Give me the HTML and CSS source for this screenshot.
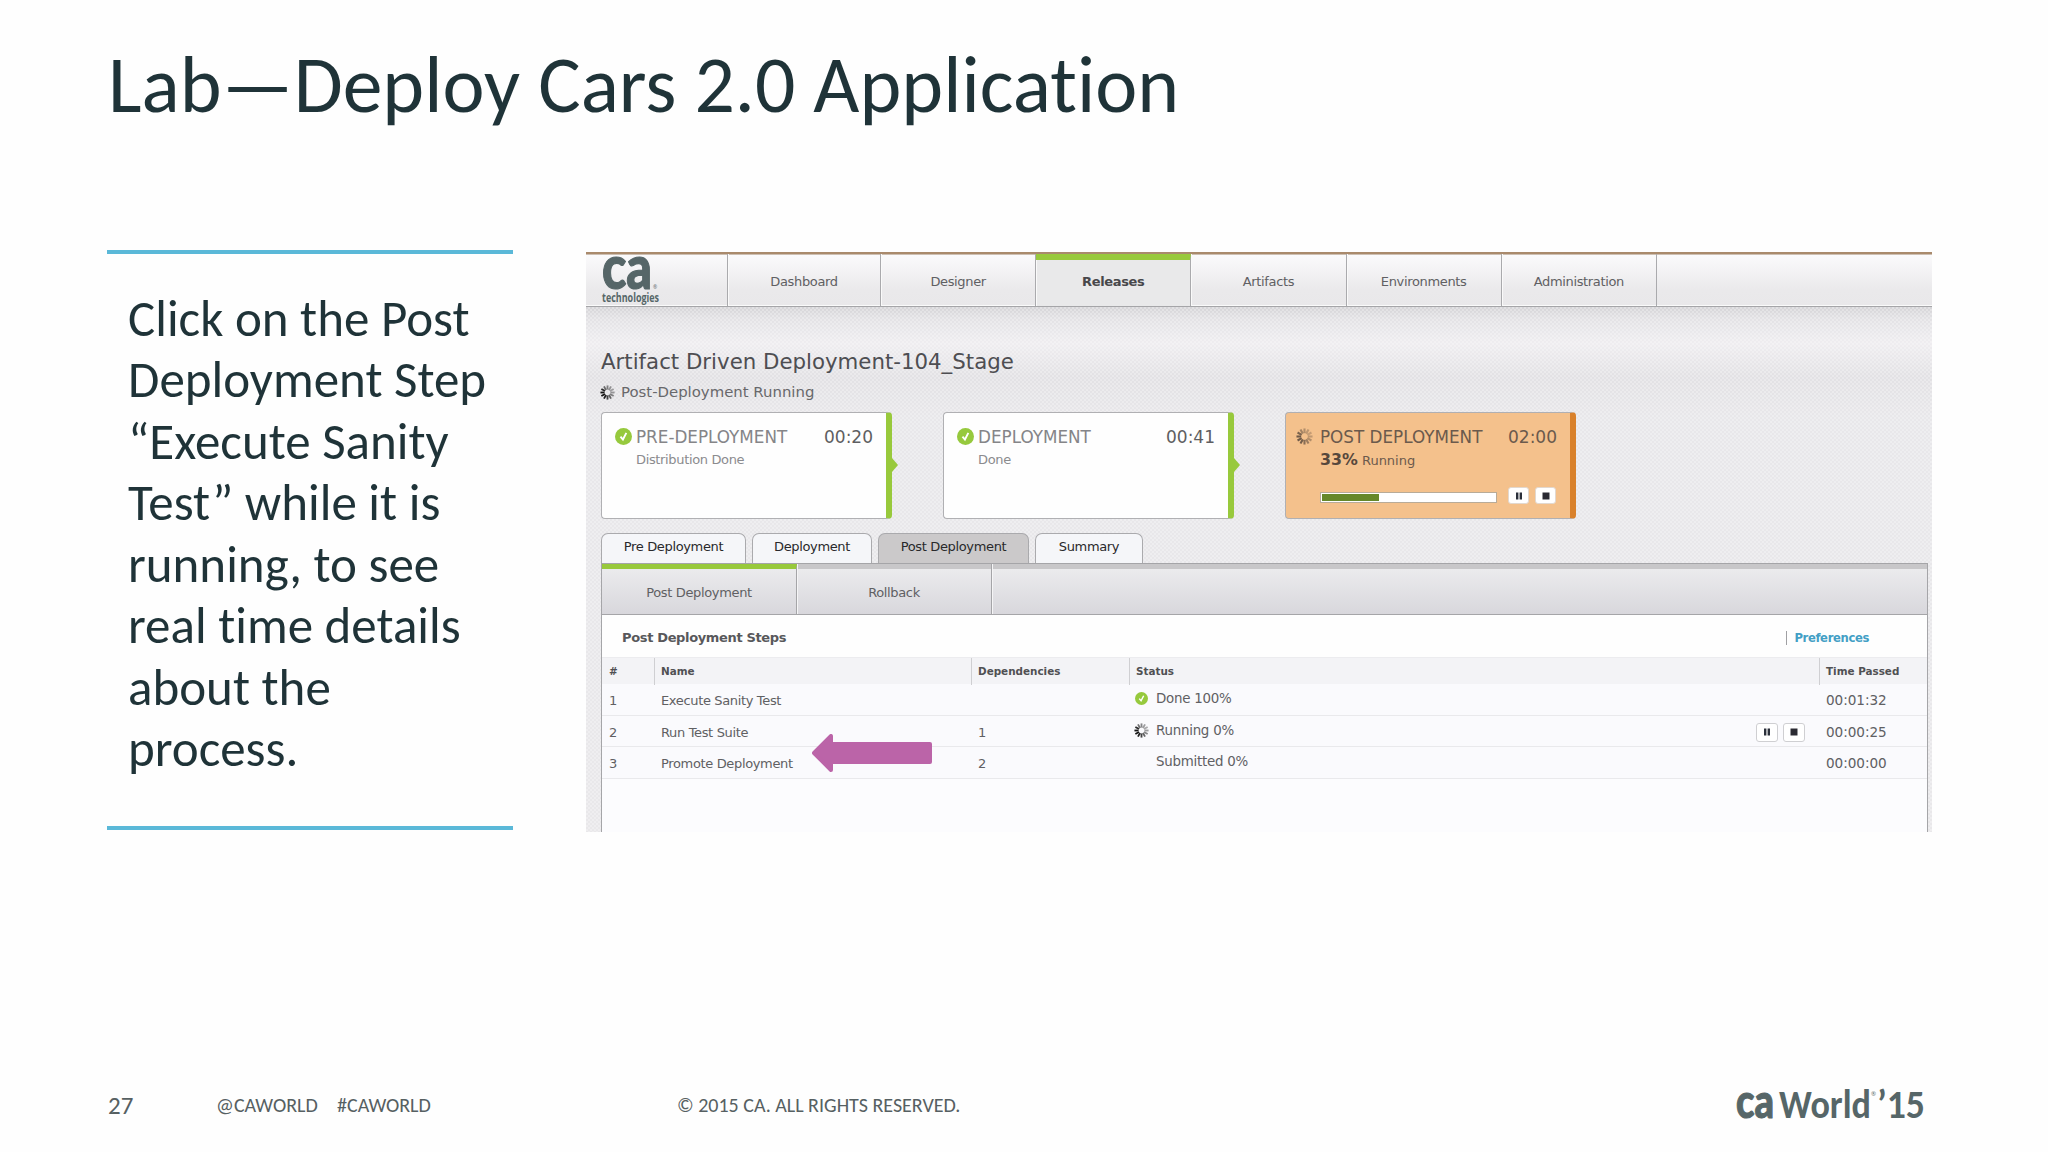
FILE: index.html
```
<!DOCTYPE html>
<html>
<head>
    <meta charset="utf-8">
    <title>Lab—Deploy Cars 2.0 Application</title>
    <link rel="stylesheet" href="styles.css">
</head>
<body>
    <svg width="0" height="0" class="defs">
        <symbol id="check" viewBox="0 0 18 18">
            <circle cx="9" cy="9" r="9" fill="#96c93d"/>
            <path d="M5.8 9.2l2.6 3L12 5.2" fill="none" stroke="#fff" stroke-width="2"/>
        </symbol>
        <symbol id="spinner" viewBox="0 0 18 18">
            <g stroke="currentColor" stroke-width="2.2">
                <path d="M9 .5v5" opacity=".5"/>
                <path d="M9 .5v5" opacity=".4" transform="rotate(30 9 9)"/>
                <path d="M9 .5v5" opacity=".35" transform="rotate(60 9 9)"/>
                <path d="M9 .5v5" opacity=".4" transform="rotate(90 9 9)"/>
                <path d="M9 .5v5" opacity=".5" transform="rotate(120 9 9)"/>
                <path d="M9 .5v5" opacity=".65" transform="rotate(150 9 9)"/>
                <path d="M9 .5v5" opacity=".8" transform="rotate(180 9 9)"/>
                <path d="M9 .5v5" opacity=".95" transform="rotate(210 9 9)"/>
                <path d="M9 .5v5" transform="rotate(240 9 9)"/>
                <path d="M9 .5v5" transform="rotate(270 9 9)"/>
                <path d="M9 .5v5" opacity=".9" transform="rotate(300 9 9)"/>
                <path d="M9 .5v5" opacity=".6" transform="rotate(330 9 9)"/>
            </g>
        </symbol>
        <symbol id="pause" viewBox="0 0 8 8">
            <path d="M1 .5h2.4v7H1zM4.6 .5H7v7H4.6z" fill="#2a2f3a"/>
        </symbol>
        <symbol id="stop" viewBox="0 0 8 8">
            <path d="M.5 .5h7v7h-7z" fill="#2a2a32"/>
        </symbol>
    </svg>

    <div class="slide">
        <h1>Lab—Deploy Cars 2.0 Application</h1>

        <div class="content">
            <div class="callout">
                Click on the Post<br>Deployment Step<br>“Execute Sanity<br>Test” while it is<br>running, to see<br>real time details<br>about the<br>process.
            </div>

            <div class="app">
                <div class="nav">
                    <div class="brand">
                        <svg width="70" height="51" viewBox="0 0 70 51">
                            <text class="brand-ca" x="0" y="35" textLength="50" lengthAdjust="spacingAndGlyphs">ca</text>
                            <text class="brand-reg" x="51" y="35">®</text>
                            <text class="brand-tech" x="0" y="47.5" textLength="57" lengthAdjust="spacingAndGlyphs">technologies</text>
                        </svg>
                    </div>
                    <div class="nav-item">Dashboard</div>
                    <div class="nav-item">Designer</div>
                    <div class="nav-item active">Releases</div>
                    <div class="nav-item">Artifacts</div>
                    <div class="nav-item">Environments</div>
                    <div class="nav-item">Administration</div>
                </div>

                <div class="page">
                    <h2>Artifact Driven Deployment-104_Stage</h2>
                    <div class="state">
                        <svg class="icon-small"><use href="#spinner"/></svg>
                        Post-Deployment Running
                    </div>

                    <div class="cards">
                        <div class="card done">
                            <svg class="icon"><use href="#check"/></svg>
                            <div class="card-main">
                                <div class="card-head"><span>PRE-DEPLOYMENT</span><span class="time">00:20</span></div>
                                <div class="card-sub">Distribution Done</div>
                            </div>
                        </div>
                        <div class="card done">
                            <svg class="icon"><use href="#check"/></svg>
                            <div class="card-main">
                                <div class="card-head"><span>DEPLOYMENT</span><span class="time">00:41</span></div>
                                <div class="card-sub">Done</div>
                            </div>
                        </div>
                        <div class="card running">
                            <svg class="icon"><use href="#spinner"/></svg>
                            <div class="card-main">
                                <div class="card-head"><span>POST DEPLOYMENT</span><span class="time">02:00</span></div>
                                <div class="card-sub"><b>33%</b> Running</div>
                                <div class="card-progress">
                                    <div class="progress"><div class="progress-fill" style="width: 33%"></div></div>
                                    <span class="btn"><svg><use href="#pause"/></svg></span>
                                    <span class="btn"><svg><use href="#stop"/></svg></span>
                                </div>
                            </div>
                        </div>
                    </div>

                    <div class="tabs">
                        <div class="tab tab-pre">Pre Deployment</div>
                        <div class="tab tab-dep">Deployment</div>
                        <div class="tab tab-post selected">Post Deployment</div>
                        <div class="tab tab-sum">Summary</div>
                    </div>

                    <div class="panel">
                        <div class="subtabs">
                            <div class="subtab active">Post Deployment</div>
                            <div class="subtab">Rollback</div>
                        </div>
                        <div class="panel-title">
                            <span>Post Deployment Steps</span>
                            <a class="preferences">Preferences</a>
                        </div>
                        <div class="row head">
                            <div>#</div>
                            <div>Name</div>
                            <div>Dependencies</div>
                            <div>Status</div>
                            <div>Time Passed</div>
                        </div>
                        <div class="row">
                            <div>1</div>
                            <div>Execute Sanity Test</div>
                            <div></div>
                            <div class="status"><span class="status-icon"><svg class="icon-check"><use href="#check"/></svg></span><span>Done 100%</span></div>
                            <div class="passed">00:01:32</div>
                        </div>
                        <div class="row">
                            <div>2</div>
                            <div>Run Test Suite</div>
                            <div>1</div>
                            <div class="status">
                                <span class="status-icon"><svg class="icon-small"><use href="#spinner"/></svg></span><span>Running 0%</span>
                                <div class="actions">
                                    <span class="btn"><svg><use href="#pause"/></svg></span>
                                    <span class="btn"><svg><use href="#stop"/></svg></span>
                                </div>
                            </div>
                            <div class="passed">00:00:25</div>
                        </div>
                        <div class="row">
                            <div>3</div>
                            <div>Promote Deployment</div>
                            <div>2</div>
                            <div class="status"><span class="status-icon"></span><span>Submitted 0%</span></div>
                            <div class="passed">00:00:00</div>
                        </div>
                    </div>
                </div>

                <svg class="pointer" width="120" height="38" viewBox="0 0 120 38">
                    <path d="M2 19L19 2v8h99v18H19v8z" fill="#bb64a8" stroke="#bb64a8" stroke-width="4" stroke-linejoin="round"/>
                </svg>
            </div>
        </div>

        <div class="footer">
            <span class="page-number">27</span>
            <span class="handle">@CAWORLD</span>
            <span class="hashtag">#CAWORLD</span>
            <span class="copyright">© 2015 CA. ALL RIGHTS RESERVED.</span>
            <svg class="logo" width="194" height="52" viewBox="0 0 194 52">
                <text class="logo-ca" x="1" y="38.5" textLength="38" lengthAdjust="spacingAndGlyphs">ca</text>
                <text class="logo-world" x="44" y="38.5" textLength="92" lengthAdjust="spacingAndGlyphs">World</text>
                <text class="logo-reg" x="136" y="17">®</text>
                <text class="logo-world" x="142" y="38.5" textLength="48" lengthAdjust="spacingAndGlyphs">’15</text>
            </svg>
        </div>
    </div>
</body>
</html>
```
FILE: styles.css
```
* {
    box-sizing: border-box;
}

body {
    margin: 0;
    background: #fefefe;
    color: #1f3338;
    font-family: Carlito, Lato, sans-serif;
    font-variant-ligatures: none;
}

.defs {
    display: block;
}

.slide {
    width: 2048px;
    height: 1152px;
    display: flex;
    flex-direction: column;
    overflow: hidden;
}

h1 {
    margin: 0;
    padding: 35px 0 0 108px;
    height: 250px;
    font-size: 79.7px;
    font-weight: normal;
    line-height: 100px;
}

.content {
    display: flex;
    gap: 73px;
    padding-left: 107px;
    height: 582px;
}

.callout {
    width: 406px;
    height: 580px;
    padding: 34px 0 0 21px;
    border-top: 4px solid #5ab8d8;
    border-bottom: 4px solid #5ab8d8;
    font-size: 51px;
    line-height: 61.45px;
    white-space: nowrap;
}

/* application window */
.app {
    position: relative;
    width: 1346px;
    height: 580px;
    margin-top: 2px;
    overflow: hidden;
    display: flex;
    flex-direction: column;
    font-family: "DejaVu Sans", sans-serif;
    font-size: 13px;
    letter-spacing: -.35px;
    color: #606063;
    white-space: nowrap;
}

.nav {
    display: flex;
    height: 55px;
    border-top: 2px solid #a98a6c;
    border-bottom: 1px solid #a5a5a8;
    background: linear-gradient(#fbfbfc, #eae9eb 70%, #e9e8ea);
    box-shadow: inset 0 1px #cdbfb2, inset 0 -1px #fafafa;
}

.brand {
    width: 142px;
    padding-left: 16px;
    border-right: 1px solid #aaaaad;
    letter-spacing: 0;
}

.brand svg {
    display: block;
    overflow: visible;
}

.brand text,
.logo text {
    fill: #566668;
}

.brand-ca {
    font: 900 61px Lato, sans-serif;
    stroke: #566668;
    stroke-width: 1.2;
}

.brand-reg {
    font: 5px "Open Sans", sans-serif;
}

.brand-tech {
    font: bold 12.5px "Open Sans", sans-serif;
}

.nav-item {
    width: 155.2px;
    line-height: 55px;
    text-align: center;
    border-right: 1px solid #aaaaad;
    box-shadow: inset 1px 0 #fafafa;
}

.brand + .nav-item {
    width: 153px;
}

.nav-item.active {
    background: #e9e9ea;
    border-top: 6px solid #98c93c;
    line-height: 43px;
    font-weight: bold;
    color: #48484b;
}

.page {
    flex: 1;
    padding: 37px 4px 0 15px;
    background:
        conic-gradient(rgba(255, 255, 255, .28) 25%, transparent 0 50%, rgba(255, 255, 255, .28) 0 75%, transparent 0) 0 0 / 4px 4px,
        linear-gradient(#d5d4d7 0, #e3e2e5 12px, #efedf0 36px, #e2e1e4 70px, #e8e7ea 110px, #e9e8ea 100%);
}

h2 {
    margin: 0;
    height: 34px;
    line-height: 36px;
    font-size: 21.3px;
    font-weight: normal;
    letter-spacing: 0;
    color: #4e4e52;
}

.state {
    display: flex;
    align-items: center;
    gap: 5px;
    height: 30px;
    margin-bottom: 4px;
    padding-bottom: 2px;
    font-size: 14.9px;
    letter-spacing: 0;
    color: #68686b;
}

.icon-small {
    width: 15px;
    height: 15px;
    margin-left: -1px;
    margin-right: 1px;
    color: #151515;
}

.cards {
    display: flex;
    gap: 51px;
    height: 107px;
}

.card {
    position: relative;
    display: flex;
    width: 291px;
    padding: 15px 13px 0 13px;
    gap: 4px;
    background: #fefefe;
    border: 1px solid #b0b0b3;
    border-right: 6px solid #98c93c;
    border-radius: 4px;
}

/* little arrow on the edge of a finished stage */
.card.done::after {
    content: "";
    position: absolute;
    right: -12px;
    top: 45px;
    border: 7px solid transparent;
    border-left: 6px solid #98c93c;
    border-right: 0;
}

.card.running {
    background: #f4c18c;
    border-right-color: #d9812b;
    padding-left: 10px;
    gap: 7px;
}

.icon {
    width: 17px;
    height: 17px;
    flex: none;
    color: #6f5a48;
}

.card-main {
    flex: 1;
}

.card-head {
    display: flex;
    justify-content: space-between;
    height: 22px;
    line-height: 18px;
    font-size: 16.8px;
    letter-spacing: 0;
    color: #858588;
}

.card-head .time {
    font-size: 17px;
    color: #5e5e61;
}

.card-sub {
    height: 22px;
    line-height: 19px;
    color: #8b8b8e;
}

.running .card-head,
.running .card-head .time,
.running .card-sub {
    color: #6b5a4c;
}

.running .card-sub {
    line-height: 20px;
    letter-spacing: 0;
}

.card-sub b {
    font-size: 15.8px;
    color: #57483c;
}

.card-progress {
    display: flex;
    align-items: center;
    gap: 6px;
    margin-top: 15px;
}

.progress {
    width: 177px;
    height: 11px;
    margin-top: 3px;
    margin-right: 5px;
    padding: 1px;
    background: #fff;
    border: 1px solid #b8ab98;
}

.progress-fill {
    height: 100%;
    background: #66882a;
}

.btn {
    display: flex;
    align-items: center;
    justify-content: center;
    width: 21px;
    height: 17px;
    flex: none;
    background: #fff;
    border: 1px solid #e2d8cf;
    border-radius: 3px;
}

.btn svg {
    width: 8px;
    height: 8px;
}

.tabs {
    display: flex;
    gap: 6px;
    height: 30px;
    margin-top: 14px;
}

.tab {
    border: 1px solid #aaaaad;
    border-bottom: 0;
    border-radius: 7px 7px 0 0;
    background: #f5f6f9;
    line-height: 26px;
    text-align: center;
    color: #29292b;
}

.tab-pre {
    width: 145px;
}

.tab-dep {
    width: 120px;
}

.tab-post {
    width: 151px;
}

.tab-sum {
    width: 108px;
}

.tab.selected {
    background: #cbc9ca;
}

.panel {
    height: 270px;
    border: 1px solid #a5a5a8;
    border-bottom: 0;
    background: #fcfcfe;
}

.subtabs {
    display: flex;
    height: 51px;
    border-bottom: 1px solid #a5a5a8;
    background: linear-gradient(#c8c7c9 5px, #ebebed 5px, #d8d7dc);
}

.subtab {
    width: 195px;
    padding-top: 5px;
    line-height: 47px;
    text-align: center;
    border-right: 1px solid #a5a5a8;
    box-shadow: 1px 0 #f5f5f6;
}

.subtab.active {
    padding-top: 0;
    border-top: 5px solid #98c93c;
}

.panel-title {
    display: flex;
    justify-content: space-between;
    align-items: center;
    height: 42px;
    padding: 3px 58px 0 20px;
    background: #fefefe;
    font-weight: bold;
    color: #58585b;
}

.preferences {
    padding-left: 7px;
    border-left: 1px solid #a0a0a3;
    font-size: 11.6px;
    color: #439fc5;
}

.row {
    display: grid;
    grid-template-columns: 53px 317px 158px 690px 1fr;
    height: 31.6px;
    line-height: 33px;
    border-bottom: 1px solid #e9e9ec;
    background: #fafafd;
}

.row > div {
    padding-left: 6px;
}

.row > div:first-child {
    padding-left: 7px;
}

.row.head {
    height: 27px;
    line-height: 27px;
    border: 0;
    border-top: 1px solid #ececef;
    background: #f3f3f6;
    font-size: 10.4px;
    font-weight: bold;
    letter-spacing: 0;
    color: #505053;
}

.row.head > div:not(:last-child) {
    border-right: 1px solid #cfcfd2;
}

.row .status {
    display: flex;
    padding: 0 15px 0 5px;
    line-height: 29px;
    font-size: 13.4px;
    letter-spacing: -.25px;
}

.status-icon {
    display: flex;
    align-items: center;
    width: 21px;
    height: 29px;
}

.icon-check {
    width: 13px;
    height: 13px;
}

.actions {
    display: flex;
    align-items: center;
    gap: 5px;
    margin-left: auto;
}

.actions .btn {
    width: 22px;
    height: 19px;
    border-color: #cfcfd2;
}

.row .passed {
    font-size: 13.6px;
    letter-spacing: -.05px;
}

/* arrow drawn over the steps table */
.pointer {
    position: absolute;
    left: 226px;
    top: 482px;
}

.footer {
    display: flex;
    align-items: center;
    margin-top: 247px;
    height: 52px;
    padding-left: 108px;
    font-size: 20px;
    color: #566062;
}

.page-number {
    width: 108px;
    font-size: 25px;
}

.handle {
    width: 121px;
}

.hashtag {
    width: 340px;
}

.copyright {
    width: 1058px;
}

.logo {
    overflow: visible;
}

.logo-ca {
    font: 900 47px Lato, sans-serif;
    stroke: #566668;
    stroke-width: 1;
}

.logo-world {
    font: bold 39.5px Carlito, sans-serif;
}

.logo-reg {
    font: 6px "Open Sans", sans-serif;
}
```
